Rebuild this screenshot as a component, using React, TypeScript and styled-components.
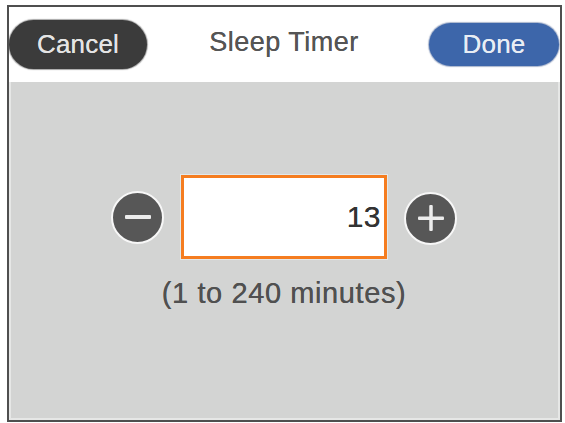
import * as React from "react";
import styled, { createGlobalStyle } from "styled-components";

const GlobalStyle = createGlobalStyle`
  html, body {
    margin: 0;
    padding: 0;
    background: #ffffff;
  }
  body {
    font-family: "Liberation Sans", Arial, Helvetica, sans-serif;
  }
`;

interface IRoundButtonProps {
  readonly kind: "minus" | "plus";
}

const SleepTimer: React.FunctionComponent = () => {
  const [minutes, setMinutes] = React.useState(13);

  const handleDecrease = () => {
    setMinutes((m) => Math.max(1, m - 1));
  };
  const handleIncrease = () => {
    setMinutes((m) => Math.min(240, m + 1));
  };

  return (
    <Frame>
      <Header>
        <CancelButton>Cancel</CancelButton>
        <Title>Sleep Timer</Title>
        <DoneButton>Done</DoneButton>
      </Header>
      <Body>
        <StepperRow>
          <RoundButton kind="minus" onClick={handleDecrease} aria-label="Decrease">
            <svg width="28" height="28" viewBox="0 0 28 28">
              <rect x="1" y="12" width="26" height="4" rx="1" fill="#ececec" />
            </svg>
          </RoundButton>
          <ValueBox>{minutes}</ValueBox>
          <RoundButton kind="plus" onClick={handleIncrease} aria-label="Increase">
            <svg width="28" height="28" viewBox="0 0 28 28">
              <rect x="1" y="12.5" width="26" height="3.5" rx="1" fill="#ececec" />
              <rect x="12.25" y="1" width="3.5" height="26" rx="1" fill="#ececec" />
            </svg>
          </RoundButton>
        </StepperRow>
        <RangeHint>(1 to 240 minutes)</RangeHint>
      </Body>
    </Frame>
  );
};

const Frame = styled.div`
  box-sizing: border-box;
  margin: 5px 0 0 7px;
  width: 555px;
  height: 417px;
  border: 2px solid #4f4f4f;
  display: flex;
  flex-direction: column;
  overflow: hidden;
`;

const Header = styled.div`
  box-sizing: border-box;
  height: 75px;
  background: #ffffff;
  display: grid;
  grid-template-columns: 1fr auto 1fr;
  align-items: center;
  padding: 0 1px 0 0;
`;

const Pill = styled.button`
  font-family: "Liberation Sans", Arial, sans-serif;
  font-size: 26px;
  letter-spacing: 0.2px;
  border: none;
  border-radius: 25px;
  cursor: pointer;
  padding: 0;
  text-shadow: 0 0 0.6px currentColor;
`;

const CancelButton = styled(Pill)`
  justify-self: start;
  width: 138px;
  height: 49px;
  background: #3b3b3b;
  color: #e4e4e4;
  box-shadow: 0 0 1px 1px rgba(0, 0, 0, 0.35);
`;

const DoneButton = styled(Pill)`
  justify-self: end;
  width: 130px;
  height: 43px;
  border-radius: 22px;
  background: #3d66aa;
  color: #e8edf4;
  box-shadow: 0 0 1px 1px rgba(40, 70, 130, 0.4);
`;

const Title = styled.div`
  font-size: 27px;
  letter-spacing: 0.5px;
  color: #555555;
  padding-bottom: 4px;
  text-shadow: 0 0 0.6px currentColor;
`;

const Body = styled.div`
  flex: 1;
  background: #d3d4d3;
  box-shadow: inset 2px 0 0 #e6e7e6, inset -2px 0 0 #e6e7e6,
    inset 0 -2px 0 #e6e7e6;
  display: flex;
  flex-direction: column;
  align-items: center;
  padding-top: 93px;
  padding-right: 1px;
`;

const StepperRow = styled.div`
  display: flex;
  align-items: center;
  gap: 17px;
`;

const RoundButton = styled.button<IRoundButtonProps>`
  box-sizing: border-box;
  width: 53px;
  height: 53px;
  border-radius: 50%;
  border: 2px solid #f7f7f7;
  background: #575757;
  display: flex;
  align-items: center;
  justify-content: center;
  padding: 0;
  cursor: pointer;
  margin-top: ${({ kind }) => (kind === "plus" ? "2px" : "0")};
`;

const ValueBox = styled.div`
  box-sizing: border-box;
  width: 206px;
  height: 84px;
  background: #ffffff;
  border: 3px solid #f57d20;
  box-shadow: 0 0 0 1px rgba(230, 236, 240, 0.8);
  display: flex;
  align-items: center;
  justify-content: flex-end;
  padding: 0 3px 0 0;
  font-size: 30px;
  letter-spacing: 0.5px;
  color: #333333;
  text-shadow: 0 0 0.6px currentColor;
`;

const RangeHint = styled.div`
  margin-top: 18px;
  font-size: 29px;
  line-height: 32px;
  letter-spacing: 0.6px;
  color: #505050;
  text-shadow: 0 0 0.6px currentColor;
`;

export default function App() {
  return (
    <>
      <GlobalStyle />
      <SleepTimer />
    </>
  );
}
